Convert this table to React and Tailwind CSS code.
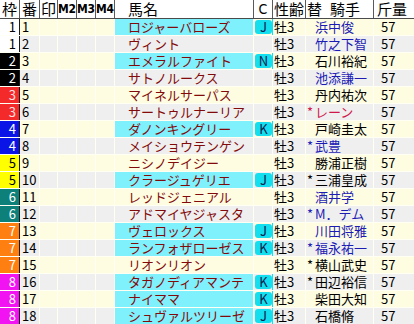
import React from 'react';

const WAKU = {
  1: 'bg-white text-black',
  2: 'bg-black text-white',
  3: 'bg-[#f42a2a] text-[#ffe0e0]',
  4: 'bg-[#0a14e6] text-white',
  5: 'bg-[#ffff00] text-black',
  6: 'bg-[#0d8079] text-white',
  7: 'bg-[#ff8010] text-white',
  8: 'bg-[#f213f2] text-white',
};

const JOCKEY_COLOR = {
  b: 'text-[#1c1cb4]',
  k: 'text-black',
  r: 'text-[#d0184c]',
};

const horses = [
  { w: 1, name: 'ロジャーバローズ', c: 'J', jockey: '浜中俊', star: false, jc: 'b' },
  { w: 1, name: 'ヴィント', c: '', jockey: '竹之下智', star: false, jc: 'b' },
  { w: 2, name: 'エメラルファイト', c: 'N', jockey: '石川裕紀', star: false, jc: 'k' },
  { w: 2, name: 'サトノルークス', c: '', jockey: '池添謙一', star: false, jc: 'b' },
  { w: 3, name: 'マイネルサーパス', c: '', jockey: '丹内祐次', star: false, jc: 'k' },
  { w: 3, name: 'サートゥルナーリア', c: '', jockey: 'レーン', star: true, jc: 'r' },
  { w: 4, name: 'ダノンキングリー', c: 'K', jockey: '戸崎圭太', star: false, jc: 'k' },
  { w: 4, name: 'メイショウテンゲン', c: '', jockey: '武豊', star: true, jc: 'b' },
  { w: 5, name: 'ニシノデイジー', c: '', jockey: '勝浦正樹', star: false, jc: 'k' },
  { w: 5, name: 'クラージュゲリエ', c: 'J', jockey: '三浦皇成', star: true, jc: 'k' },
  { w: 6, name: 'レッドジェニアル', c: '', jockey: '酒井学', star: false, jc: 'b' },
  { w: 6, name: 'アドマイヤジャスタ', c: '', jockey: 'M．デム', star: true, jc: 'b' },
  { w: 7, name: 'ヴェロックス', c: 'J', jockey: '川田将雅', star: false, jc: 'b' },
  { w: 7, name: 'ランフォザローゼス', c: 'K', jockey: '福永祐一', star: true, jc: 'b' },
  { w: 7, name: 'リオンリオン', c: '', jockey: '横山武史', star: true, jc: 'k' },
  { w: 8, name: 'タガノディアマンテ', c: 'K', jockey: '田辺裕信', star: true, jc: 'k' },
  { w: 8, name: 'ナイママ', c: 'K', jockey: '柴田大知', star: false, jc: 'k' },
  { w: 8, name: 'シュヴァルツリーゼ', c: 'J', jockey: '石橋脩', star: false, jc: 'k' },
];

const HeaderCell = ({ className = '', children }) => (
  <div className={`h-full shrink-0 border-r border-[#5a5a5a] flex items-center overflow-hidden whitespace-nowrap ${className}`}>
    {children}
  </div>
);

const narrow = { fontFamily: '"DejaVu Sans Condensed", "Liberation Sans", sans-serif' };

const App = () => {
  return (
    <div
      className="w-[414px] h-[324px] overflow-hidden bg-white text-black"
      style={{ fontFamily: '"Noto Sans CJK JP", "Noto Sans", sans-serif' }}
    >
      {/* header */}
      <div className="flex h-[19px] border-b border-[#4a4a4a] bg-white text-[15px] leading-[18px]">
        <HeaderCell className="w-[20px] justify-center">枠</HeaderCell>
        <HeaderCell className="w-[20px] justify-center">番</HeaderCell>
        <HeaderCell className="w-[18px] justify-center">印</HeaderCell>
        <HeaderCell className="w-[19px] justify-center">
          <span className="text-[12px] font-semibold" style={narrow}>M2</span>
        </HeaderCell>
        <HeaderCell className="w-[19px] justify-center">
          <span className="text-[12px] font-semibold" style={narrow}>M3</span>
        </HeaderCell>
        <HeaderCell className="w-[19px] justify-center">
          <span className="text-[12px] font-semibold" style={narrow}>M4</span>
        </HeaderCell>
        <HeaderCell className="w-[139px] pl-[13px]">馬名</HeaderCell>
        <HeaderCell className="w-[19px] justify-center">
          <span className="text-[14px]" style={narrow}>C</span>
        </HeaderCell>
        <HeaderCell className="w-[33px] pl-[1px]">性齢</HeaderCell>
        <HeaderCell className="w-[68px] pl-[1px]">
          <span>替</span>
          <span className="ml-[8px]">騎手</span>
        </HeaderCell>
        <div className="w-[40px] shrink-0 h-full flex items-center pl-[3px]">斤量</div>
      </div>

      {/* body */}
      {horses.map((h, i) => {
        const rowBg = i % 2 === 0 ? 'bg-[#fffde1]' : 'bg-[#efefef]';
        const marked = h.c !== '';
        return (
          <div key={i} className={`flex h-[17px] border-b border-[#fffff4] text-[13px] leading-[16px] ${rowBg}`}>
            <div className={`w-[20px] shrink-0 border-r border-[#1a1a1a] text-right pr-[3px] ${WAKU[h.w]}`}>{h.w}</div>
            <div className="w-[20px] shrink-0 border-r border-[#fffff4] pl-[2px] overflow-hidden">{i + 1}</div>
            <div className="w-[18px] shrink-0 border-r border-[#fffff4]"></div>
            <div className="w-[19px] shrink-0 border-r border-[#fffff4]"></div>
            <div className="w-[19px] shrink-0 border-r border-[#fffff4]"></div>
            <div className="w-[19px] shrink-0 border-r border-[#fffff4]"></div>
            <div
              className={`w-[139px] shrink-0 border-r border-[#fffff4] pl-[13px] text-[#820a0a] whitespace-nowrap overflow-hidden ${
                marked ? 'bg-[#7ff1fd]' : ''
              }`}
            >
              {h.name}
            </div>
            <div className={`w-[19px] shrink-0 border-r flex items-stretch ${marked ? 'border-[#14dfee]' : 'border-[#fffff4]'}`}>
              {marked && (
                <div className="flex-1 ml-[1px] my-[1px] rounded-[3px] bg-[#14dfee] text-[#0c2050] flex items-center justify-center text-[13px] leading-[14px]">
                  {h.c}
                </div>
              )}
            </div>
            <div className="w-[33px] shrink-0 border-r border-[#fffff4] pl-[1px]">牡3</div>
            <div className={`w-[68px] shrink-0 border-r border-[#fffff4] pl-[1px] whitespace-nowrap overflow-hidden flex ${JOCKEY_COLOR[h.jc]}`}>
              <span className="inline-block w-[8px] shrink-0">{h.star ? '*' : ''}</span>
              <span>{h.jockey}</span>
            </div>
            <div className="w-[40px] shrink-0 pl-[7px]">57</div>
          </div>
        );
      })}
    </div>
  );
};

export default App;
